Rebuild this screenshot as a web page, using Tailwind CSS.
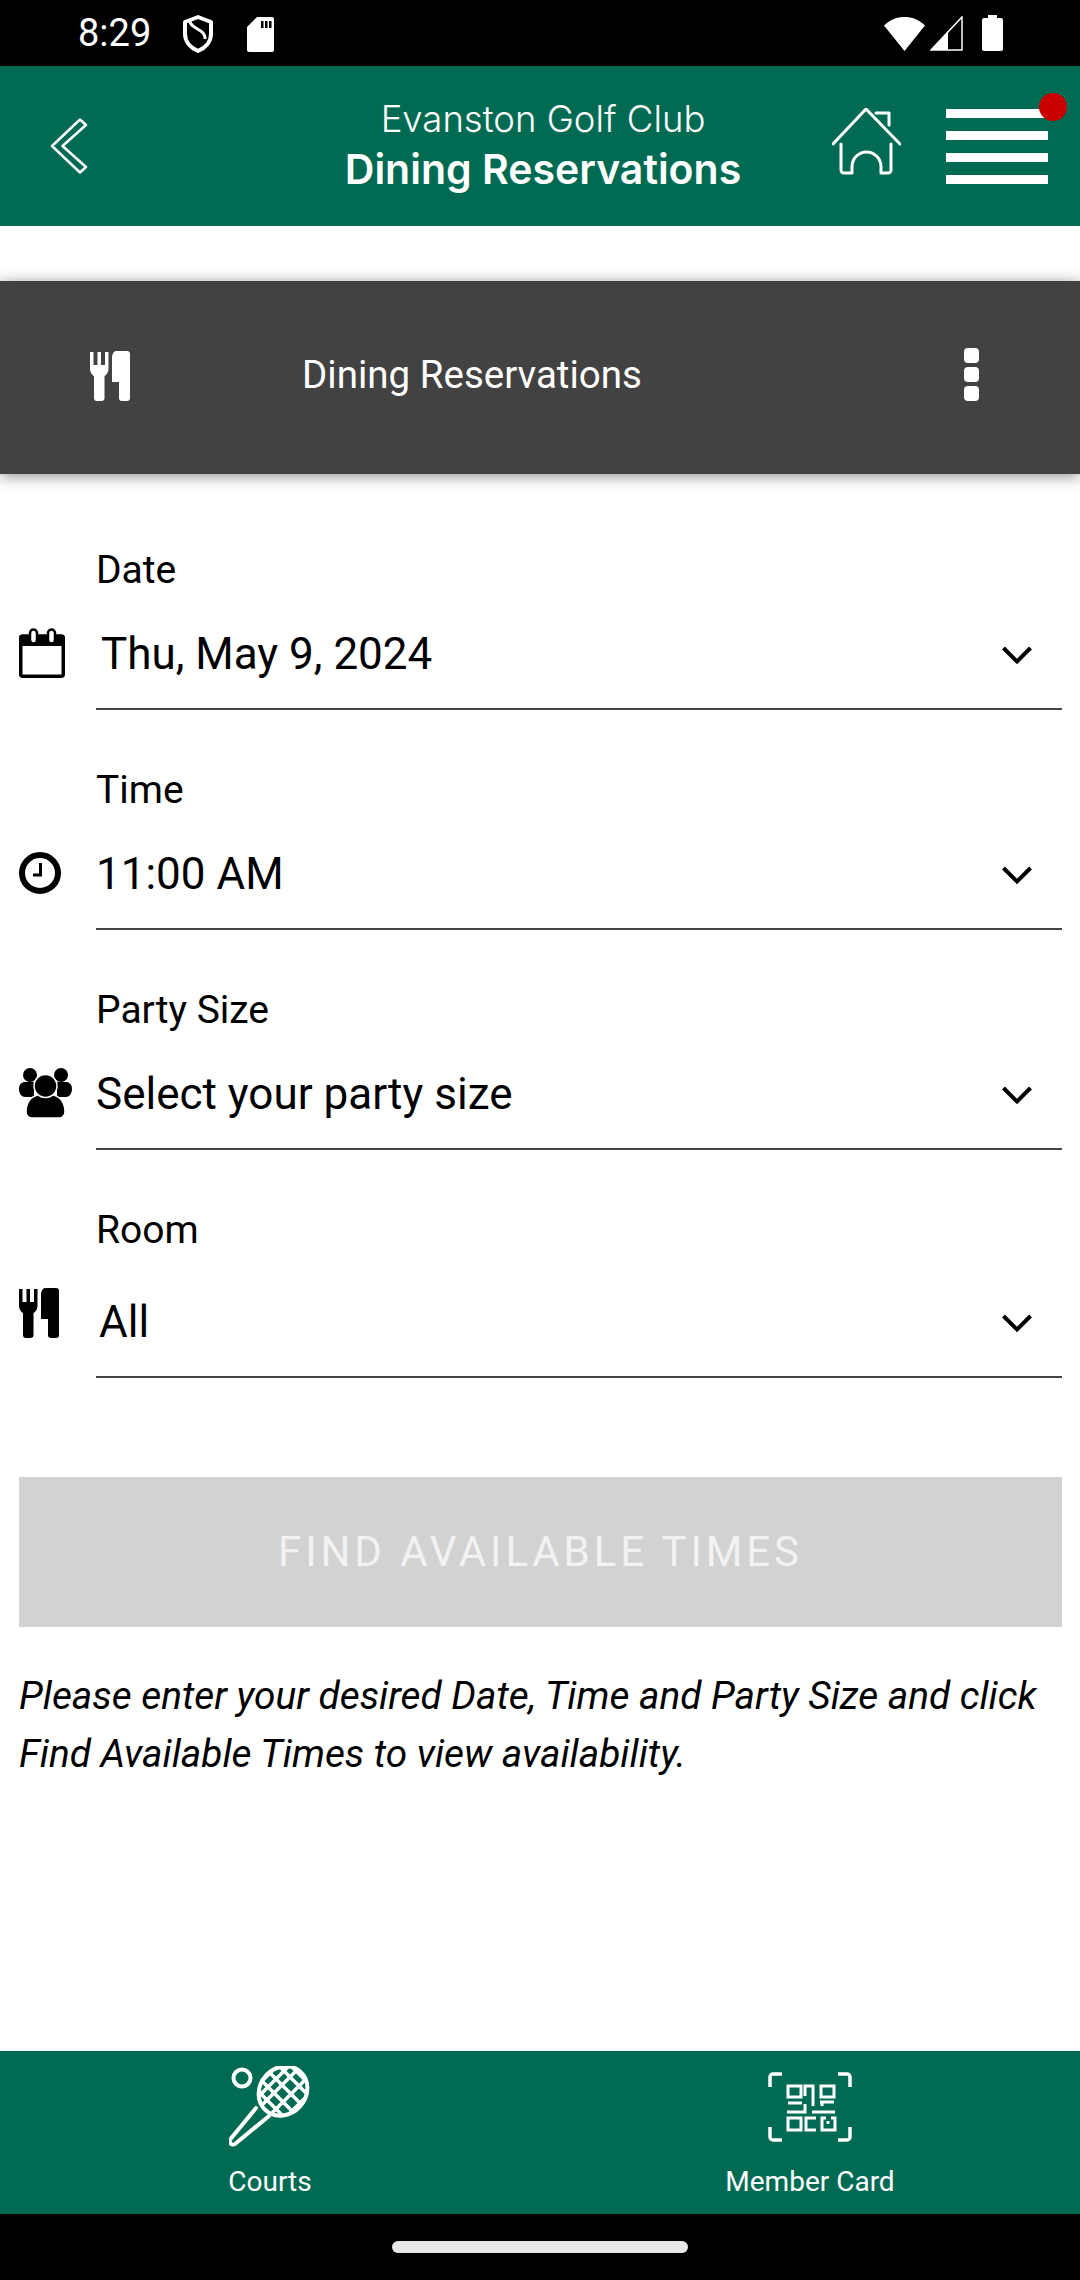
<!DOCTYPE html>
<html lang="en">
<head>
    <meta charset="UTF-8">
    <meta name="viewport" content="width=device-width, initial-scale=1.0">
    <title>Dining Reservations</title>
    <script src="https://cdn.jsdelivr.net/npm/@tailwindcss/browser@4"></script>
</head>
<body class="bg-white">
<div class="w-[1080px] h-[2280px] flex flex-col overflow-hidden font-[Roboto,sans-serif] text-black">

    <!-- status bar -->
    <div class="h-[66px] bg-black flex items-center text-white shrink-0">
        <span class="ml-[78px] w-[72px] text-[38px] leading-none">8:29</span>
        <svg class="ml-[32px] mt-[2px]" width="32" height="38" viewBox="0 0 32 38"><path d="M16 2 29 7v12c0 8-6 14-13 17C9 33 3 27 3 19V7z" fill="none" stroke="#fff" stroke-width="4" stroke-linejoin="round"/><path d="M8 6c0 8 16 8 15 18" fill="none" stroke="#fff" stroke-width="3"/></svg>
        <svg class="ml-[33px] mt-[2px]" width="27" height="35" viewBox="0 0 27 35"><path d="M10 0h15a2 2 0 0 1 2 2v31a2 2 0 0 1-2 2H2a2 2 0 0 1-2-2V10z" fill="#fff"/><path d="M14 4h2.500v7H14zM18 4h2.500v7H18zM22 4h2.500v7H22z" fill="#000"/></svg>
        <svg class="ml-[610px]" width="41" height="35" viewBox="0 0 41 35"><path d="M0 9.500C6 3.500 13 1 20.500 1S35 3.500 41 9.500L20.500 35z" fill="#fff"/></svg>
        <svg class="ml-[5px]" width="33" height="35" viewBox="0 0 33 35"><path d="M32 1v33H1z" fill="none" stroke="#fff" stroke-width="1.500"/><path d="M18 15 1 34h17z" fill="#fff"/></svg>
        <svg class="ml-[19px]" width="21" height="36" viewBox="0 0 21 36"><path d="M6 0h9v3h4a2 2 0 0 1 2 2v29a2 2 0 0 1-2 2H2a2 2 0 0 1-2-2V5a2 2 0 0 1 2-2h4z" fill="#fff"/></svg>
    </div>

    <!-- green header -->
    <div class="h-[160px] bg-[#006b52] text-white flex items-center shrink-0 relative">
        <svg class="ml-[50px]" width="38" height="56" viewBox="0 0 38 56"><path d="M30 1.500 36 7 12.500 28 36 49 30 54.500 2 28Z" fill="none" stroke="#fff" stroke-width="2.500" stroke-linejoin="round"/></svg>
        <div class="ml-[230px] w-[450px] text-center font-[Inter,sans-serif] mb-[4px]">
            <div class="text-[36.500px] leading-[50px] font-light whitespace-nowrap">Evanston Golf Club</div>
            <div class="text-[41px] leading-[50px] font-semibold whitespace-nowrap">Dining Reservations</div>
        </div>
        <svg class="ml-[64px] mb-[8px]" width="69" height="68" viewBox="0 0 69 68" fill="none" stroke="#fff" stroke-width="3" stroke-linecap="round" stroke-linejoin="round"><path d="M1 36 34 1l34 35M44 5h13v12M9 36v26a3 3 0 0 0 3 3h8V58.500a14.500 14.500 0 0 1 29 0V65h7a3 3 0 0 0 3-3V36"/></svg>
        <div class="ml-[45px] w-[102px] flex flex-col gap-[13px]">
            <div class="h-[9px] bg-white"></div>
            <div class="h-[9px] bg-white"></div>
            <div class="h-[9px] bg-white"></div>
            <div class="h-[9px] bg-white"></div>
        </div>
        <div class="absolute left-[1039px] top-[27px] w-[28px] h-[28px] rounded-full bg-[#c90000]"></div>
    </div>

    <!-- dark sub header -->
    <div class="mt-[55px] h-[193px] bg-[#424242] text-white flex items-center shrink-0 shadow-[0_2px_14px_rgba(0,0,0,0.45)]">
        <svg class="ml-[90px] mb-[3px]" width="40" height="50" viewBox="0 0 40 50" fill="#fff"><path d="M0 1h3.500v13h4V1H11v13h4V1h3.500v17c0 3-2 6-4 7v22a3 3 0 0 1-3 3H7a3 3 0 0 1-3-3V25c-2-1-4-4-4-7z"/><path d="M26 0h11a3 3 0 0 1 3 3v44a3 3 0 0 1-3 3h-5a3 3 0 0 1-3-3V31h-7V7c0-4 2-7 4-7z"/></svg>
        <div class="ml-[172px] w-[340px] text-center text-[38.500px] mb-[5px] whitespace-nowrap">Dining Reservations</div>
        <div class="ml-[322px] mb-[6px] flex flex-col gap-[4px]">
            <div class="w-[15px] h-[15px] rounded-[4px] bg-white"></div>
            <div class="w-[15px] h-[15px] rounded-[4px] bg-white"></div>
            <div class="w-[15px] h-[15px] rounded-[4px] bg-white"></div>
        </div>
    </div>

    <!-- form -->
    <div class="flex-1 pt-[16px] pr-[18px]">
        <div class="mt-[53px]">
            <div class="ml-[96px] h-[51px] leading-[54px] text-[39px]">Date</div>
            <div class="flex items-start">
                <div class="w-[96px] pl-[19px] pt-[34px] shrink-0">
                    <svg width="46" height="50" viewBox="0 0 46 50"><rect x="1.750" y="8" width="42.500" height="40.250" rx="2" fill="none" stroke="#000" stroke-width="3.500"/><rect x="0" y="7" width="46" height="11" rx="3" fill="#000"/><rect x="11" y="1.500" width="7" height="14" rx="3.500" fill="#fff" stroke="#000" stroke-width="2.500"/><rect x="29" y="1.500" width="7" height="14" rx="3.500" fill="#fff" stroke="#000" stroke-width="2.500"/></svg>
                </div>
                <div class="flex-1 flex items-center justify-between border-b-2 border-[#444] pt-[25px] pb-[19px]">
                    <span class="pl-[5px] text-[44px] leading-[70px]">Thu, May 9, 2024</span>
                    <svg class="mr-[29px] mt-[2px]" width="32" height="20" viewBox="0 0 32 20"><path d="M2.500 3 16 16.500 29.500 3" fill="none" stroke="#000" stroke-width="4"/></svg>
                </div>
            </div>
        </div>

        <div class="mt-[53px]">
            <div class="ml-[96px] h-[51px] leading-[54px] text-[39px]">Time</div>
            <div class="flex items-start">
                <div class="w-[96px] pl-[19px] pt-[38px] shrink-0">
                    <svg width="42" height="42" viewBox="0 0 42 42"><circle cx="21" cy="21" r="18" fill="none" stroke="#000" stroke-width="6"/><path d="M21.500 11v12H14" fill="none" stroke="#000" stroke-width="3"/></svg>
                </div>
                <div class="flex-1 flex items-center justify-between border-b-2 border-[#444] pt-[25px] pb-[19px]">
                    <span class="text-[44px] leading-[70px]">11:00 AM</span>
                    <svg class="mr-[29px] mt-[2px]" width="32" height="20" viewBox="0 0 32 20"><path d="M2.500 3 16 16.500 29.500 3" fill="none" stroke="#000" stroke-width="4"/></svg>
                </div>
            </div>
        </div>

        <div class="mt-[53px]">
            <div class="ml-[96px] h-[51px] leading-[54px] text-[39px]">Party Size</div>
            <div class="flex items-start">
                <div class="w-[96px] pl-[19px] pt-[34px] shrink-0">
                    <svg width="53" height="50" viewBox="0 0 53 50"><circle cx="11" cy="7" r="7"/><circle cx="42" cy="7" r="7"/><path d="M0 21c0-5 3-7 6-7h9v15H6c-3 0-6-3-6-8zM53 21c0-5-3-7-6-7h-9v15h9c3 0 6-3 6-8z"/><path d="M7 44c0-13 7-18 19.500-18S46 31 46 44a6 6 0 0 1-6 6H13a6 6 0 0 1-6-6z" stroke="#fff" stroke-width="1.500"/><circle cx="26.500" cy="18" r="11.500" stroke="#fff" stroke-width="1.500"/></svg>
                </div>
                <div class="flex-1 flex items-center justify-between border-b-2 border-[#444] pt-[25px] pb-[19px]">
                    <span class="text-[44px] leading-[70px]">Select your party size</span>
                    <svg class="mr-[29px] mt-[2px]" width="32" height="20" viewBox="0 0 32 20"><path d="M2.500 3 16 16.500 29.500 3" fill="none" stroke="#000" stroke-width="4"/></svg>
                </div>
            </div>
        </div>

        <div class="mt-[53px]">
            <div class="ml-[96px] h-[51px] leading-[54px] text-[39px]">Room</div>
            <div class="flex items-start">
                <div class="w-[96px] pl-[19px] pt-[34px] shrink-0">
                    <svg width="40" height="50" viewBox="0 0 40 50"><path d="M0 1h3.500v13h4V1H11v13h4V1h3.500v17c0 3-2 6-4 7v22a3 3 0 0 1-3 3H7a3 3 0 0 1-3-3V25c-2-1-4-4-4-7z"/><path d="M26 0h11a3 3 0 0 1 3 3v44a3 3 0 0 1-3 3h-5a3 3 0 0 1-3-3V31h-7V7c0-4 2-7 4-7z"/></svg>
                </div>
                <div class="flex-1 flex items-center justify-between border-b-2 border-[#444] pt-[33px] pb-[19px]">
                    <span class="pl-[3px] text-[44px] leading-[70px]">All</span>
                    <svg class="mr-[29px] mt-[2px]" width="32" height="20" viewBox="0 0 32 20"><path d="M2.500 3 16 16.500 29.500 3" fill="none" stroke="#000" stroke-width="4"/></svg>
                </div>
            </div>
        </div>

        <button class="mt-[99px] ml-[19px] w-[1043px] h-[150px] pb-[2px] bg-[#d2d2d2] text-[#f2f2f2] text-[42px] tracking-[3.900px]">FIND AVAILABLE TIMES</button>
        <p class="mt-[40px] ml-[19px] w-[1043px] text-[38.800px] leading-[58px] italic">Please enter your desired Date, Time and Party Size and click Find Available Times to view availability.</p>
    </div>

    <!-- bottom tabs -->
    <div class="h-[163px] bg-[#006b52] text-white grid grid-cols-2 shrink-0 text-[28px]">
        <div class="flex flex-col items-center pt-[15px]">
            <svg width="82" height="82" viewBox="0 0 82 82" fill="none" stroke="#fff" stroke-linecap="round" stroke-linejoin="round">
                <defs><clipPath id="head"><ellipse cx="54" cy="25" rx="26" ry="23" transform="rotate(-48 54 25)"/></clipPath></defs>
                <circle cx="13" cy="12" r="8.500" stroke-width="4"/>
                <g clip-path="url(#head)" stroke-width="3.500">
                    <path d="M30 -4 86 52M22 4 78 60M20 16 66 62M38 -12 94 44M50 -12 94 32"/>
                    <path d="M78 -6 22 50M88 2 32 58M96 12 40 68M66 -6 18 42M56 -8 18 30"/>
                </g>
                <ellipse cx="54" cy="25" rx="26" ry="23" transform="rotate(-48 54 25)" stroke-width="4"/>
                <path d="M27 42 1.500 73a3 3 0 0 0 5 4.500L40 50" stroke-width="4"/>
            </svg>
            <span class="leading-[30px] mt-[19px]">Courts</span>
        </div>
        <div class="flex flex-col items-center pt-[21px]">
            <svg width="84" height="70" viewBox="0 0 84 70" fill="none" stroke="#fff" stroke-width="3.500">
                <path d="M2 15V5a3 3 0 0 1 3-3h9M70 2h9a3 3 0 0 1 3 3v10M2 55v10a3 3 0 0 0 3 3h9M70 68h9a3 3 0 0 0 3-3V55"/>
                <g stroke-width="3">
                    <rect x="20" y="14" width="13" height="11"/><rect x="53" y="14" width="13" height="11"/><rect x="20" y="46" width="13" height="12"/>
                    <path d="M37 24V14h8v20M20 31h14M52 30h14M54 30v4M19 40h18v-8M44 40h23M48 46H38v12h10M58 46h-4v12h13V46h-4M60 52v-3"/>
                </g>
            </svg>
            <span class="leading-[30px] mt-[25px]">Member Card</span>
        </div>
    </div>

    <!-- nav bar -->
    <div class="h-[66px] bg-black flex justify-center shrink-0">
        <div class="mt-[27px] w-[296px] h-[12px] rounded-full bg-[#e8e8e8]"></div>
    </div>
</div>
</body>
</html>
